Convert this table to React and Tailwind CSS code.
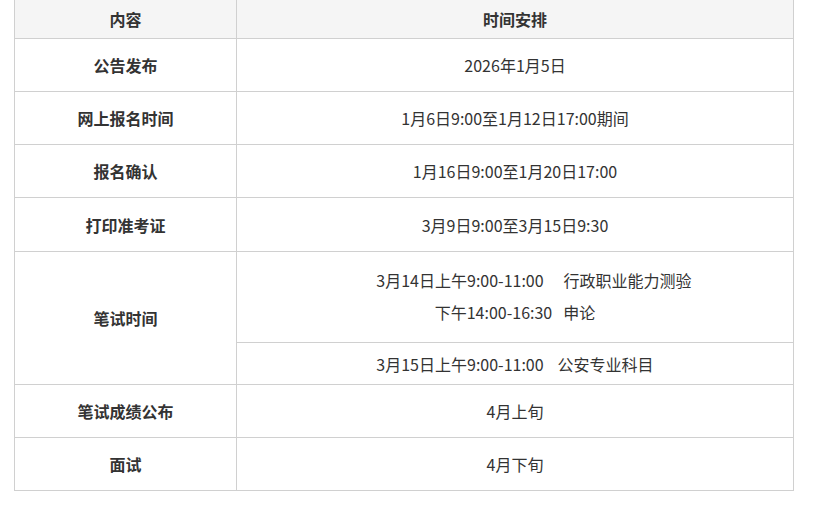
import React from "react";

const font = { fontFamily: '"Microsoft YaHei", "Noto Sans CJK SC", "Noto Sans", sans-serif' };

function Row({ label, value, h }) {
  return (
    <div className={`flex border-b border-[#d0d0d0] ${h}`}>
      <div className="w-[222px] shrink-0 border-r border-[#d0d0d0] flex items-center justify-center font-bold">
        {label}
      </div>
      <div className="flex-1 flex items-center justify-center">{value}</div>
    </div>
  );
}

export default function App() {
  return (
    <div className="w-[813px] h-[506px] bg-white overflow-hidden">
      <div
        className="ml-[14px] w-[780px] border-l border-r border-[#d0d0d0] text-[16px] text-[#333333] leading-none"
        style={font}
      >
        <div className="flex border-b border-[#d0d0d0] h-[39px] bg-[#f5f5f5] font-bold">
          <div className="w-[222px] shrink-0 border-r border-[#d0d0d0] flex items-center justify-center">内容</div>
          <div className="flex-1 flex items-center justify-center">时间安排</div>
        </div>
        <Row label="公告发布" value="2026年1月5日" h="h-[53px]" />
        <Row label="网上报名时间" value="1月6日9:00至1月12日17:00期间" h="h-[53px]" />
        <Row label="报名确认" value="1月16日9:00至1月20日17:00" h="h-[53px]" />
        <Row label="打印准考证" value="3月9日9:00至3月15日9:30" h="h-[54px]" />
        <div className="flex border-b border-[#d0d0d0]">
          <div className="w-[222px] shrink-0 border-r border-[#d0d0d0] flex items-center justify-center font-bold">
            笔试时间
          </div>
          <div className="flex-1 flex flex-col">
            <div className="h-[91px] border-b border-[#d0d0d0] flex flex-col items-center justify-center gap-[16px] pb-[2px]">
              <div className="flex items-center">
                <span className="inline-block w-[38px]"></span>
                <span>3月14日上午9:00-11:00</span>
                <span className="inline-block w-[20px]"></span>
                <span>行政职业能力测验</span>
              </div>
              <div className="flex items-center">
                <span>下午14:00-16:30</span>
                <span className="inline-block w-[11px]"></span>
                <span>申论</span>
              </div>
            </div>
            <div className="h-[41px] flex items-center justify-center">
              <span>3月15日上午9:00-11:00</span>
              <span className="inline-block w-[14px]"></span>
              <span>公安专业科目</span>
            </div>
          </div>
        </div>
        <Row label="笔试成绩公布" value="4月上旬" h="h-[53px]" />
        <Row label="面试" value="4月下旬" h="h-[53px]" />
      </div>
    </div>
  );
}
